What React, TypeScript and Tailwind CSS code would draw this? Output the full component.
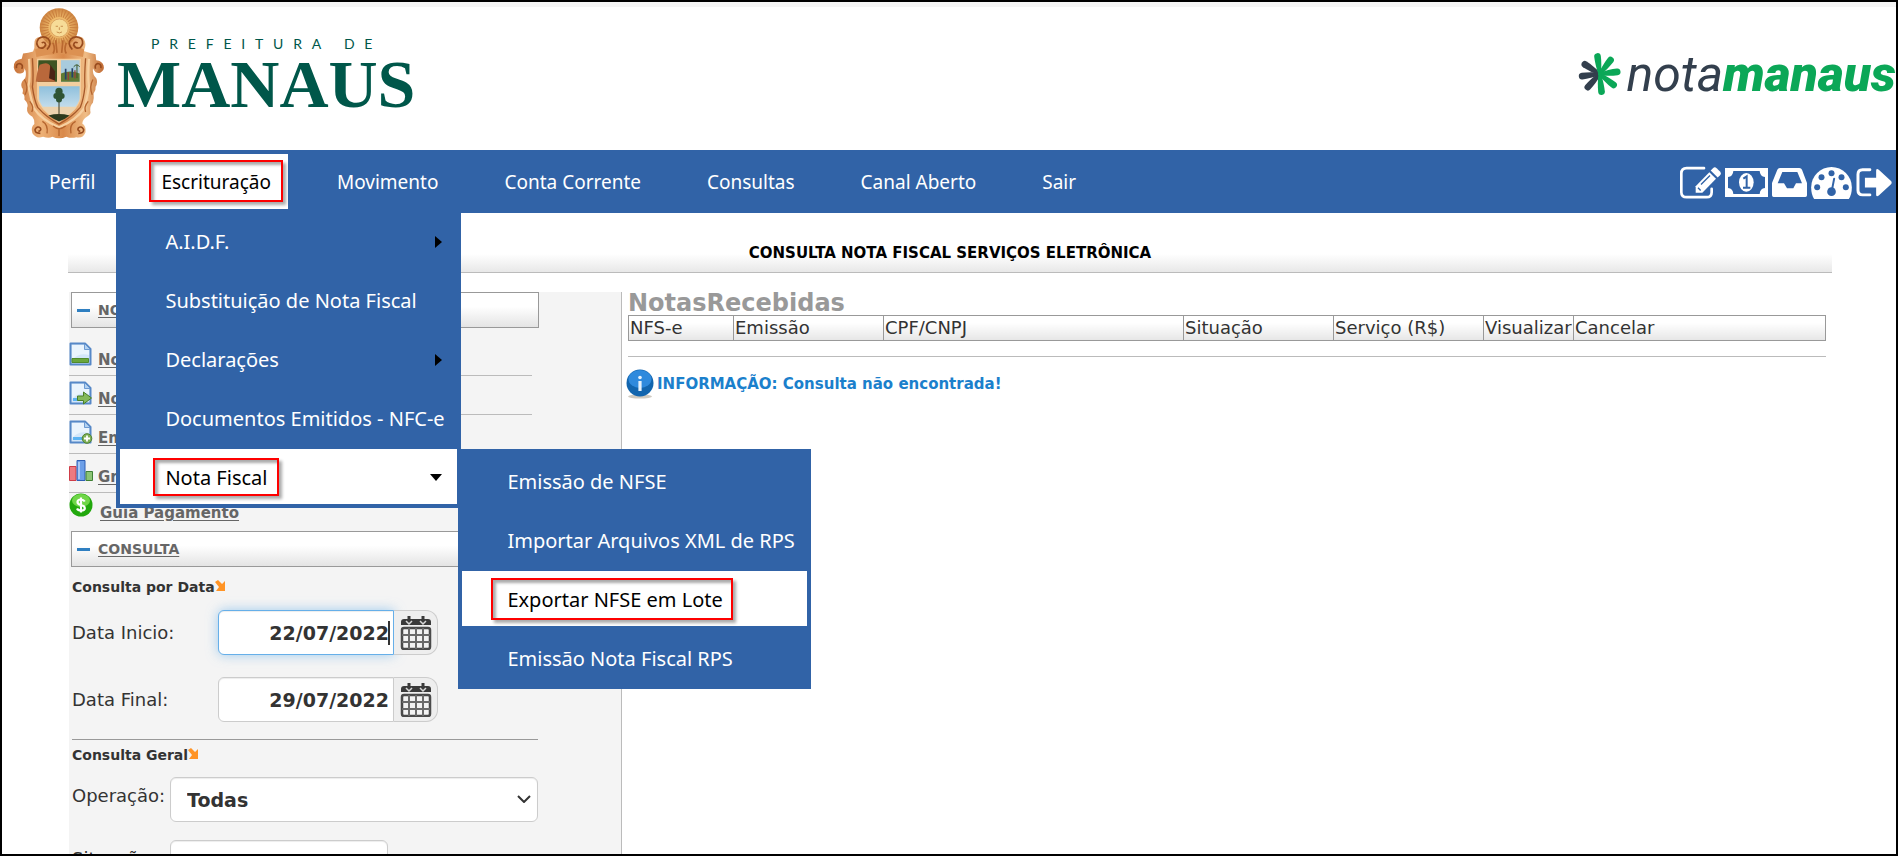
import React, { useState } from 'react';

interface MenuEntry {
  label: string;
  arrow?: boolean;
  children?: MenuEntry[];
}

const escrituracaoMenu: MenuEntry[] = [
  { label: 'A.I.D.F.', arrow: true },
  { label: 'Substituição de Nota Fiscal' },
  { label: 'Declarações', arrow: true },
  { label: 'Documentos Emitidos - NFC-e' },
  {
    label: 'Nota Fiscal',
    children: [
      { label: 'Emissão de NFSE' },
      { label: 'Importar Arquivos XML de RPS' },
      { label: 'Exportar NFSE em Lote' },
      { label: 'Emissão Nota Fiscal RPS' },
    ],
  },
];

const mainMenu: MenuEntry[] = [
  { label: 'Perfil' },
  { label: 'Escrituração', children: escrituracaoMenu },
  { label: 'Movimento' },
  { label: 'Conta Corrente' },
  { label: 'Consultas' },
  { label: 'Canal Aberto' },
  { label: 'Sair' },
];

const columns = [
  { label: 'NFS-e', width: 'w-[105px]' },
  { label: 'Emissão', width: 'w-[150px]' },
  { label: 'CPF/CNPJ', width: 'w-[300px]' },
  { label: 'Situação', width: 'w-[150px]' },
  { label: 'Serviço (R$)', width: 'w-[150px]' },
  { label: 'Visualizar', width: 'w-[90px]' },
  { label: 'Cancelar', width: '' },
];

const Crest = () => (
  <svg viewBox="40 22 276 400" className="h-[133px] w-[92px] shrink-0" aria-hidden="true">
    <defs>
      <linearGradient id="gold" x1="0" x2="1" y1="0" y2="0">
        <stop offset="0" stopColor="#c8733a" />
        <stop offset="0.3" stopColor="#eeb277" />
        <stop offset="0.55" stopColor="#d9894a" />
        <stop offset="0.8" stopColor="#f0bd86" />
        <stop offset="1" stopColor="#c06a33" />
      </linearGradient>
      <radialGradient id="sun">
        <stop offset="0" stopColor="#fdeaae" />
        <stop offset="0.5" stopColor="#efbb6c" />
        <stop offset="1" stopColor="#cd8441" />
      </radialGradient>
      <linearGradient id="sky" x1="0" x2="0" y1="0" y2="1">
        <stop offset="0" stopColor="#8fc0dc" />
        <stop offset="1" stopColor="#e4eff5" />
      </linearGradient>
    </defs>
    <path
      d="M122 112Q102 112 104 135Q106 146 100 156Q86 160 70 162L66 178Q40 182 42 204Q46 224 62 222Q76 220 74 206Q82 220 76 236Q60 250 66 264Q72 270 68 282Q76 286 74 300Q88 314 82 326Q80 344 98 352Q106 362 104 374Q92 384 98 402Q110 420 130 412Q148 418 158 412Q178 422 200 412Q214 418 230 414Q252 418 258 398Q260 380 248 372Q250 358 262 352Q276 344 272 334Q270 320 280 310Q284 296 282 282Q290 272 288 262Q296 248 290 236Q278 226 280 206Q288 224 302 220Q316 212 312 198Q308 184 290 182L288 164Q268 160 252 154Q260 140 256 126Q250 108 236 112Z"
      fill="url(#gold)"
    />
    <circle cx="178" cy="84" r="58" fill="url(#sun)" />
    {Array.from({ length: 32 }, (_, i) => (
      <line
        key={i}
        x1="178"
        y1="52"
        x2="178"
        y2="28"
        stroke="#c97f3f"
        strokeWidth="3"
        transform={`rotate(${i * 11.25} 178 84)`}
      />
    ))}
    <circle cx="179" cy="85" r="27" fill="#f7dc98" stroke="#dba461" strokeWidth="3" />
    <path d="M168 80h7M183 80h7M179 83v8M171 97q8 6 16 0" stroke="#c99150" strokeWidth="3" fill="none" />
    <path d="M106 150Q180 112 254 150L250 172Q180 154 110 172Z" fill="#dc9152" />
    <g fill="none" stroke="#984b1e" strokeWidth="5">
      <path d="M142 150Q158 132 146 118Q130 106 116 118Q106 132 118 144Q132 150 138 136Q136 124 126 130" />
      <path d="M218 150Q202 132 214 118Q230 106 246 118Q254 132 242 144Q228 150 222 136Q224 124 234 130" />
      <path d="M168 122L172 160M190 122L186 160M160 130Q168 150 160 162M200 130Q192 150 200 162" stroke="#b9682f" />
      <path d="M50 206Q48 192 60 192Q72 196 66 208M304 206Q306 192 294 192Q284 196 288 208" />
      <path d="M122 402Q104 402 106 390Q114 378 122 386Q126 394 116 396M236 402Q254 402 252 390Q244 378 236 386Q232 394 242 396" />
    </g>
    <path d="M88 178Q92 240 86 260Q94 300 102 326Q126 362 178 384Q230 362 254 326Q262 300 268 260Q264 230 268 178" fill="none" stroke="#f7d0a0" strokeWidth="7" />
    <path d="M98 176Q102 236 98 262Q104 304 114 324Q140 354 178 374Q216 354 242 324Q252 300 256 262Q254 230 258 176" fill="none" stroke="#a6592a" strokeWidth="4" />
    <path d="M74 240Q88 262 76 286M280 240Q268 262 278 286M90 306Q104 322 96 338M266 306Q252 322 258 338M128 366Q146 376 142 402M228 366Q208 376 214 402M160 380Q178 396 198 380M178 386V410" fill="none" stroke="#b4642e" strokeWidth="4" />
    <path d="M112 178H244V296Q238 330 178 370Q118 330 112 296Z" fill="#f4cf9f" />
    <path d="M116 182H172V247H114Z" fill="#3e5423" />
    <path d="M120 196Q144 184 152 200L166 220V247H108Q112 214 120 196Z" fill="#b9683b" />
    <path d="M152 196L166 216V244L148 236Z" fill="#492416" />
    <path d="M184 182H240V247H184Z" fill="#a8cbdd" />
    <path d="M184 222Q212 210 240 222V247H184Z" fill="#5f7a34" />
    <path d="M198 208V240M218 206V234" stroke="#25406b" strokeWidth="5" />
    <path d="M206 218V242M226 212V236" stroke="#94403a" strokeWidth="4" />
    <path d="M232 196V236M222 202Q232 190 240 202" stroke="#3b5527" strokeWidth="3" fill="none" />
    <path d="M118 260H240V298Q234 328 178 364Q122 328 118 298Z" fill="url(#sky)" />
    <path d="M126 322H232Q222 338 178 364Q136 338 126 322Z" fill="#ecd3ae" />
    <path d="M146 348Q178 340 210 348Q196 360 178 366Q160 358 146 348Z" fill="#2c3a1d" />
    <path d="M178 300V352" stroke="#3b3a22" strokeWidth="3" />
    <g fill="#2f5434">
      <circle cx="178" cy="276" r="11" />
      <circle cx="170" cy="290" r="9" />
      <circle cx="186" cy="290" r="9" />
      <circle cx="178" cy="300" r="9" />
    </g>
  </svg>
);

const petals = [
  { angle: 222, color: '#333f4d' },
  { angle: 263, color: '#333f4d' },
  { angle: 303, color: '#333f4d' },
  { angle: -7, color: '#0ba757' },
  { angle: 38, color: '#0ba757' },
  { angle: 83, color: '#0ba757' },
  { angle: 128, color: '#0ba757' },
  { angle: 174, color: '#0ba757' },
];

const Flower = () => (
  <svg viewBox="14 22 132 132" className="h-11 w-11 shrink-0" aria-hidden="true">
    {petals.map(petal => (
      <path
        key={petal.angle}
        d="M-3 4C-8 -18 -10 -38 -10 -53A10 10 0 0 1 10 -53C10 -38 8 -18 3 4Z"
        fill={petal.color}
        transform={`translate(79 88) rotate(${petal.angle})`}
      />
    ))}
  </svg>
);

const navIcons = [
  {
    title: 'Editar',
    box: '366 406 123 98',
    size: 'h-[33px] w-[41px]',
    art: (
      <>
        <path
          d="M438 412H386Q370 412 370 428V484Q370 499 386 499H446Q461 499 461 484V474"
          fill="none"
          stroke="#fff"
          strokeWidth="8"
          strokeLinecap="round"
        />
        <path d="M413 466L454 424L474 444L433 486H413Z" fill="#fff" />
        <path d="M458 419L465 412Q470 407 476 412L486 422Q491 428 486 433L479 440Z" fill="#fff" />
        <path d="M429 461L456 434M420 471L428 479" stroke="#3163a7" strokeWidth="4" />
      </>
    ),
  },
  {
    title: 'Valores',
    box: '501 417 129 87',
    size: 'h-[29px] w-[43px]',
    art: (
      <>
        <path
          fillRule="evenodd"
          d="M501 417H630V504H501ZM526 426Q525 443 510 444V477Q525 478 526 495H605Q606 478 621 477V444Q606 443 605 426Z"
          fill="#fff"
        />
        <ellipse cx="565" cy="460" rx="22" ry="28" fill="#fff" />
        <path d="M556 449L566 442V475M555 476H577" fill="none" stroke="#3163a7" strokeWidth="6" />
      </>
    ),
  },
  {
    title: 'Caixa de entrada',
    box: '640 417 105 87',
    size: 'h-[29px] w-[35px]',
    art: (
      <path
        fillRule="evenodd"
        d="M664 417H722Q728 417 730 422L745 462V499Q745 504 740 504H645Q640 504 640 499V462L656 422Q658 417 664 417ZM671 429L657 463H676L685 478H704L712 463H730L716 429Z"
        fill="#fff"
      />
    ),
  },
  {
    title: 'Painel',
    box: '755 417 122 96',
    size: 'h-[32px] w-[41px]',
    art: (
      <>
        <path d="M764 513Q755 500 755 478A61 61 0 0 1 877 478Q877 500 868 513Z" fill="#fff" />
        <g fill="#3163a7">
          <circle cx="773" cy="478" r="9" />
          <circle cx="786" cy="448" r="9" />
          <circle cx="816" cy="436" r="9" />
          <circle cx="846" cy="448" r="9" />
          <circle cx="859" cy="478" r="9" />
          <circle cx="816" cy="491" r="13" />
        </g>
        <path d="M817 488L824 452" stroke="#3163a7" strokeWidth="6" strokeLinecap="round" />
      </>
    ),
  },
  {
    title: 'Encerrar',
    box: '886 417 109 87',
    size: 'h-[29px] w-[36px]',
    art: (
      <>
        <path
          d="M928 422H906Q892 422 892 436V484Q892 498 906 498H928"
          fill="none"
          stroke="#fff"
          strokeWidth="9"
          strokeLinecap="round"
        />
        <path d="M913 446H947V424Q948 417 955 422L992 456Q996 461 992 466L955 500Q948 505 947 498V476H913Z" fill="#fff" />
      </>
    ),
  },
];

const DocIcon = ({ kind }: { kind: 'plain' | 'arrow' | 'add' }) => (
  <svg viewBox="0 0 24 24" className="h-6 w-6 shrink-0" aria-hidden="true">
    <path d="M1.500 1.500H16L21.500 7V22.500H1.500Z" fill="#d3e6f9" stroke="#5688c7" strokeWidth="2" strokeLinejoin="round" />
    <path d="M3 3H15V8H20V13Q10 10 3 18Z" fill="#eaf4fd" />
    <path d="M15.500 2V7.500H21" fill="#b3d2f1" stroke="#6d9ad2" />
    {kind === 'plain' && <path d="M3 16.500H19.500V20.500H3Z" fill="#6aa63c" stroke="#508a2b" />}
    {kind !== 'plain' && <path d="M4 17H14V20H4Z" fill="#5cb4f3" />}
    {kind === 'arrow' && (
      <path d="M8.500 15H14.500V11L22.500 17L14.500 23V19.500H8.500Z" fill="#84b95c" stroke="#4a8028" strokeLinejoin="round" />
    )}
    {kind === 'add' && (
      <>
        <circle cx="18" cy="18.500" r="4.800" fill="#7fb057" stroke="#4f8130" />
        <path d="M18 15.500V21.500M15 18.500H21" stroke="#fff" strokeWidth="1.800" />
      </>
    )}
  </svg>
);

const ChartIcon = () => (
  <svg viewBox="0 0 24 24" className="h-6 w-6 shrink-0" aria-hidden="true">
    <path d="M0.500 7.500H7V21.500H0.500Z" fill="#ee7a80" stroke="#cf3c47" />
    <path d="M8 1.500H16V21.500H8Z" fill="#6d9fe8" stroke="#2f5fb4" />
    <path d="M10 3V20" stroke="#a8c8f6" strokeWidth="2" />
    <path d="M17 12.500H23.500V21.500H17Z" fill="#8cc474" stroke="#3f8034" />
  </svg>
);

const MoneyIcon = () => (
  <svg viewBox="0 0 24 24" className="h-6 w-6 shrink-0" aria-hidden="true">
    <circle cx="12" cy="12" r="11.500" fill="#22a80d" />
    <ellipse cx="12" cy="7.500" rx="9" ry="6.500" fill="#6fd648" />
    <path
      d="M15.800 8.500Q14.500 6.500 12 6.500Q8.500 6.500 8.500 9Q8.500 11.200 12 12Q15.800 12.800 15.800 15.200Q15.800 17.500 12 17.500Q9 17.500 8 15.500M12 4.500V19.500"
      fill="none"
      stroke="#fff"
      strokeWidth="2.200"
    />
  </svg>
);

const InfoIcon = () => (
  <svg viewBox="0 0 28 30" className="h-[30px] w-7 shrink-0" aria-hidden="true">
    <ellipse cx="14" cy="27.500" rx="12" ry="2" fill="#cfcac0" />
    <circle cx="14" cy="14" r="13.500" fill="#1265ae" />
    <ellipse cx="14" cy="10" rx="11.500" ry="9" fill="#2f8add" />
    <circle cx="14" cy="8.500" r="1.800" fill="#e8f2fb" />
    <path d="M14 12V22" stroke="#e8f2fb" strokeWidth="3.200" />
  </svg>
);

const CalendarIcon = () => (
  <svg viewBox="0 0 32 34" className="h-[34px] w-8" aria-hidden="true">
    <path d="M1 9V6Q1 3 4 3H28Q31 3 31 6V9Z" fill="#3a3a3a" />
    <path d="M9 0V7M23 0V7" stroke="#3a3a3a" strokeWidth="3" />
    <path d="M6 5L9 8L12 5M20 5L23 8L26 5" fill="none" stroke="#d8d8d8" strokeWidth="1.500" />
    <rect x="2" y="12" width="28" height="21" rx="2" fill="#f2f2f2" stroke="#4a4a4a" strokeWidth="2.500" />
    <path d="M9 12V33M16 12V33M23 12V33M2 19H30M2 26H30" stroke="#6a6a6a" strokeWidth="2" />
  </svg>
);

const OrangeArrow = () => (
  <svg viewBox="0 0 12 12" className="mb-0.5 h-3 w-3" aria-hidden="true">
    <path d="M0 2L3 0L7 4L10 1V11H1L4 7Z" fill="#ff9426" />
  </svg>
);

// Red frame drawn round a menu label
const Marker = ({ className }: { className: string }) => (
  <span
    className={`pointer-events-none absolute border-2 border-[#fe0000] shadow-[3px_3px_3px_#00000055,inset_3px_3px_3px_#00000055] ${className}`}
  />
);

const menuItem = 'flex h-[55px] w-full items-center whitespace-nowrap pl-[45px]';

const SubMenu = () => (
  <ul className="absolute left-[338px] top-0 flex w-[353px] flex-col gap-1 bg-[#3163a7] p-1 text-white">
    {escrituracaoMenu[4].children!.map(item => (
      <li key={item.label}>
        {item.label === 'Exportar NFSE em Lote' ? (
          <a href="#" className={`${menuItem} bg-white pr-[15px] pt-0.5 text-black`}>
            <span className="relative">
              {item.label}
              <Marker className="-bottom-2 -left-4 -right-2.5 -top-2.5" />
            </span>
          </a>
        ) : (
          <a href="#" className={`${menuItem} pr-[15px] pt-0.5`}>{item.label}</a>
        )}
      </li>
    ))}
  </ul>
);

const DropMenu = () => (
  <ul className="absolute left-0 top-[55px] z-20 flex w-[345px] flex-col gap-1 bg-[#3163a7] p-1 text-[20px] text-white">
    {escrituracaoMenu.map(item => (
      <li key={item.label} className="relative">
        {item.children ? (
          <>
            <a href="#" className={`${menuItem} justify-between bg-white pr-[15px] pt-0.5 text-black`}>
              <span className="relative">
                {item.label}
                <Marker className="-bottom-1.5 -left-3 -right-3 -top-2" />
              </span>
              <span className="border-x-[6px] border-t-[7px] border-x-transparent border-t-black" />
            </a>
            <SubMenu />
          </>
        ) : (
          <a href="#" className={`${menuItem} justify-between pr-[15px] pt-0.5`}>
            {item.label}
            {item.arrow && <span className="border-y-[6px] border-l-[7px] border-y-transparent border-l-black" />}
          </a>
        )}
      </li>
    ))}
  </ul>
);

const PanelHeader = ({ children }: { children: React.ReactNode }) => (
  <h2 className="ml-0.5 flex h-9 w-[468px] items-center gap-2 border border-[#999] bg-linear-to-b from-white from-40% to-[#e4e4e4] pl-[5px] text-[14px] font-bold text-[#666]">
    <span className="h-[3px] w-[13px] bg-[#2f7fc1]" />
    <a href="#" className="underline underline-offset-2">{children}</a>
  </h2>
);

const shortcuts = [
  { label: 'Notas Recebidas', icon: <DocIcon kind="plain" /> },
  { label: 'Notas Emitidas', icon: <DocIcon kind="arrow" /> },
  { label: 'Emitir Nota', icon: <DocIcon kind="add" /> },
  { label: 'Gráficos', icon: <ChartIcon /> },
];

interface DateFieldProps {
  id: string;
  label: string;
  value: string;
  active?: boolean;
  onChange: (value: string) => void;
}

const DateField = ({ id, label, value, active, onChange }: DateFieldProps) => (
  <div className="flex items-center">
    <label htmlFor={id} className="w-[146px]">{label}</label>
    <div className="relative">
      <input
        id={id}
        type="text"
        value={value}
        onChange={e => onChange(e.target.value)}
        className={`block h-[45px] w-[176px] rounded-l-md border bg-white pr-1 text-right text-[19px] font-bold outline-none ${
          active
            ? 'border-[#66afe9] shadow-[inset_0_1px_1px_#00000013,0_0_12px_#66afe999]'
            : 'border-[#ccc] shadow-[inset_0_1px_1px_#00000013]'
        }`}
      />
      {active && <span className="absolute right-1 top-[11px] h-6 w-0.5 bg-[#333]" />}
    </div>
    <button
      type="button"
      aria-label="Abrir calendário"
      className="relative flex h-[45px] w-11 items-center justify-center rounded-r-xl border border-l-0 border-[#ccc] bg-[#eee]"
    >
      <CalendarIcon />
    </button>
  </div>
);

const App: React.FC = () => {
  const [inicio, setInicio] = useState('22/07/2022');
  const [final, setFinal] = useState('29/07/2022');

  return (
    <div className="flex h-screen flex-col overflow-hidden border-2 border-black bg-white font-['DejaVu_Sans',Verdana,sans-serif] text-[18px] leading-6 text-[#333]">
      <header className="flex h-[148px] shrink-0 items-start justify-between border-t-[5px] border-[#f5f5f5] pl-[11px]">
        <div className="flex">
          <Crest />
          <div className="pl-3 pt-[27px] text-[#00574a]">
            <p className="pl-[34px] font-['Lato',sans-serif] text-[14px] leading-5 tracking-[0.7em]">PREFEITURA DE</p>
            <p className="font-['Liberation_Serif',serif] text-[68px] font-bold leading-[60px]">MANAUS</p>
          </div>
        </div>
        <div className="flex items-center gap-1 pt-[37px] font-['Roboto',sans-serif] text-[50px] italic leading-[60px]">
          <Flower />
          <p className="text-[#333f4d]">
            nota<span className="font-black text-[#0ba757]">manaus</span>
          </p>
        </div>
      </header>

      <nav className="flex h-[63px] shrink-0 items-center justify-between bg-[#3163a7] font-['Noto_Sans',Tahoma,sans-serif] text-[19px] text-white">
        <ul className="flex gap-1 pl-0.5">
          {mainMenu.map(item => (
            <li key={item.label} className="relative">
              {item.children ? (
                <>
                  <button type="button" className={`${menuItem} bg-white pr-[17px] text-black`}>
                    <span className="relative">
                      {item.label}
                      <Marker className="-bottom-2 -left-3 -right-3 -top-2.5" />
                    </span>
                  </button>
                  <DropMenu />
                </>
              ) : (
                <a href="#" className={`${menuItem} pr-[17px]`}>{item.label}</a>
              )}
            </li>
          ))}
        </ul>
        <div className="flex gap-1 pr-1 pt-0.5">
          {navIcons.map(icon => (
            <a key={icon.title} href="#" aria-label={icon.title} className="flex items-center">
              <svg viewBox={icon.box} className={icon.size} aria-hidden="true">{icon.art}</svg>
            </a>
          ))}
        </div>
      </nav>

      <main className="ml-[66px] mr-16 flex min-h-0 grow flex-col">
        <h1 className="mt-[23px] h-[37px] shrink-0 border-b border-[#bbb] bg-linear-to-b from-white from-50% to-[#e8e8e8] pt-[5px] text-center text-[15px] font-bold text-black">
          CONSULTA NOTA FISCAL SERVIÇOS ELETRÔNICA
        </h1>

        <div className="ml-px mt-[19px] flex min-h-0 grow">
          <aside className="w-[553px] shrink-0 border-r border-[#bbb] bg-[#f4f4f4]">
            <PanelHeader>NOTA FISCAL</PanelHeader>
            <ul className="w-[463px] pt-[9px] text-[15px] font-bold text-[#666]">
              {shortcuts.map(item => (
                <li key={item.label} className="flex h-[39px] gap-[5px] border-b border-[#bbb] pt-[5px]">
                  {item.icon}
                  <a href="#" className="pt-1.5 underline underline-offset-2">{item.label}</a>
                </li>
              ))}
              <li className="flex h-[38px] gap-[7px]">
                <MoneyIcon />
                <a href="#" className="pt-2 underline underline-offset-2">Guia Pagamento</a>
              </li>
            </ul>
            <PanelHeader>CONSULTA</PanelHeader>

            <form className="ml-[3px] w-[466px] pt-2">
              <h3 className="flex items-center text-[14px] font-bold">
                Consulta por Data
                <OrangeArrow />
              </h3>
              <div className="flex flex-col gap-[22px] border-b border-[#999] pb-[17px] pt-[11px]">
                <DateField id="inicio" label="Data Inicio:" value={inicio} active onChange={setInicio} />
                <DateField id="final" label="Data Final:" value={final} onChange={setFinal} />
              </div>
              <h3 className="flex items-center pt-[3px] text-[14px] font-bold">
                Consulta Geral
                <OrangeArrow />
              </h3>
              <div className="flex flex-col gap-[18px] pt-2.5">
                <div className="flex">
                  <label htmlFor="operacao" className="w-[98px] shrink-0 pt-[7px]">Operação:</label>
                  <div className="relative grow">
                    <select
                      id="operacao"
                      className="block h-[45px] w-full appearance-none rounded-md border border-[#ccc] bg-white pl-4 text-[19px] font-bold shadow-[inset_0_1px_1px_#00000013]"
                    >
                      <option>Todas</option>
                    </select>
                    <svg viewBox="0 0 14 8" className="pointer-events-none absolute right-[7px] top-[18px] h-2 w-3.5" aria-hidden="true">
                      <path d="M1 1L7 7L13 1" fill="none" stroke="#333" strokeWidth="2" />
                    </svg>
                  </div>
                </div>
                <div className="flex">
                  <label htmlFor="situacao" className="w-[98px] shrink-0 pt-[7px]">Situação:</label>
                  <select
                    id="situacao"
                    className="block h-[45px] w-[218px] appearance-none rounded-md border border-[#ccc] bg-white pl-4 text-[19px] font-bold shadow-[inset_0_1px_1px_#00000013]"
                  >
                    <option>Todas</option>
                  </select>
                </div>
              </div>
            </form>
          </aside>

          <section className="min-w-0 grow pl-1.5 pr-1.5">
            <h2 className="text-[24px] font-bold leading-[23px] text-[#999]">NotasRecebidas</h2>
            <table className="w-full table-fixed border border-[#999] bg-linear-to-b from-white from-30% to-[#e6e6e6]">
              <thead>
                <tr>
                  {columns.map(col => (
                    <th
                      key={col.label}
                      scope="col"
                      className={`h-[25px] whitespace-nowrap border-r border-[#999] pl-px text-left font-normal last:border-r-0 ${col.width}`}
                    >
                      {col.label}
                    </th>
                  ))}
                </tr>
              </thead>
            </table>
            <hr className="mt-[15px] border-[#bbb]" />
            <p className="-ml-0.5 flex items-center gap-[3px] pt-3 text-[15px] font-bold text-[#1b80cc]">
              <InfoIcon />
              INFORMAÇÃO: Consulta não encontrada!
            </p>
          </section>
        </div>
      </main>
    </div>
  );
};

export default App;
